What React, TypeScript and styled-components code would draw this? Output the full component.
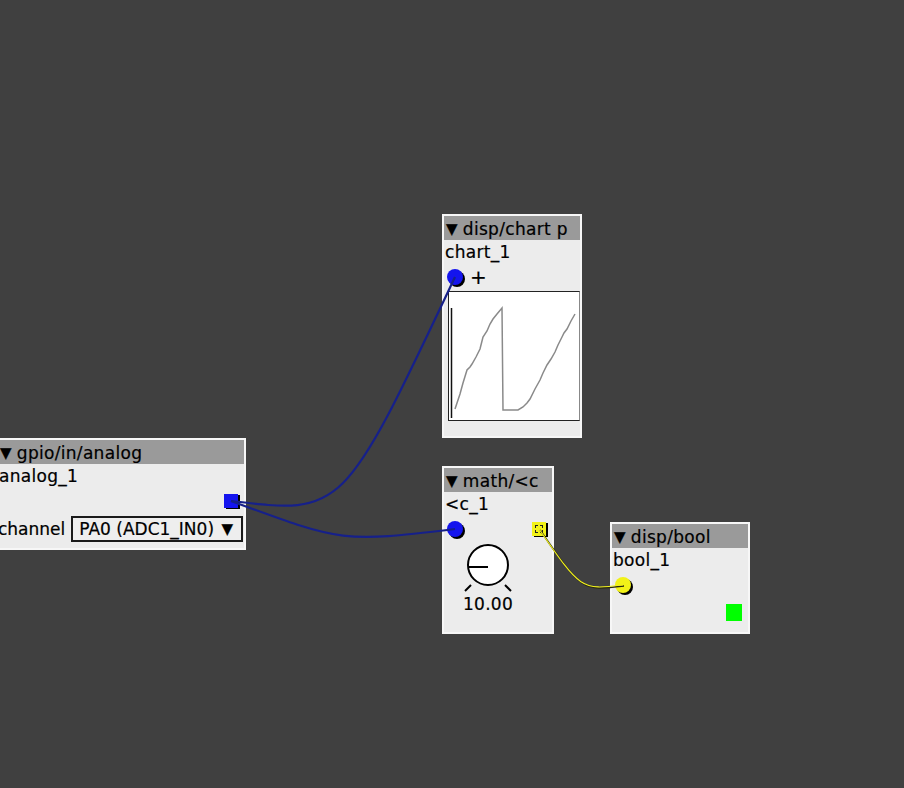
import React from 'react';
import styled, { createGlobalStyle } from 'styled-components';

const GlobalStyle = createGlobalStyle`
  html, body {
    margin: 0;
    padding: 0;
    background: #404040;
  }
  body {
    font-family: 'DejaVu Sans', 'Liberation Sans', sans-serif;
  }
`;

const Canvas = styled.div`
  position: relative;
  width: 904px;
  height: 788px;
  overflow: hidden;
  background: #404040;
`;

const ObjectBox = styled.div<{ $x: number; $y: number; $w: number; $h: number }>`
  position: absolute;
  left: ${(p) => p.$x}px;
  top: ${(p) => p.$y}px;
  width: ${(p) => p.$w}px;
  height: ${(p) => p.$h}px;
  box-sizing: border-box;
  border: 2px solid #f7f7f7;
  background: #ececec;
  display: flex;
  flex-direction: column;
  font-size: 17px;
  letter-spacing: 0.3px;
  -webkit-text-stroke: 0.2px #000;
  color: #000;
`;

const Header = styled.div`
  height: 24px;
  flex-shrink: 0;
  box-sizing: border-box;
  background: #9a9a9a;
  display: flex;
  align-items: center;
  padding: 2px 0 0 2px;
  white-space: nowrap;
  overflow: hidden;
`;

const Collapse = styled.span`
  font-size: 15px;
  margin-right: 5px;
`;

const InstanceName = styled.div`
  height: 24px;
  line-height: 24px;
  padding-left: 1px;
  white-space: nowrap;
  flex-shrink: 0;
`;

const PortRow = styled.div<{ $align?: string }>`
  height: 26px;
  flex-shrink: 0;
  display: flex;
  align-items: center;
  justify-content: ${(p) => p.$align || 'space-between'};
  padding: 0 6px 0 3px;
`;

const InletDot = styled.div<{ $color: string }>`
  width: 16px;
  height: 16px;
  border-radius: 50%;
  background: ${(p) => p.$color};
  box-shadow: 2px 2px 0 #000;
  flex-shrink: 0;
`;

const OutletSquare = styled.div<{ $color: string; $dashed?: boolean }>`
  position: relative;
  width: 14px;
  height: 14px;
  background: ${(p) => p.$color};
  box-shadow: 2px 1px 0 #000;
  flex-shrink: 0;

  &::after {
    content: '';
    display: ${(p) => (p.$dashed ? 'block' : 'none')};
    position: absolute;
    inset: 3px;
    border: 1px dashed #222;
  }
`;

const Plus = styled.span`
  margin-left: 7px;
  font-size: 20px;
  line-height: 1;
`;

const ChartArea = styled.div`
  margin: 1px 0 0 4px;
  width: 132px;
  height: 130px;
  box-sizing: border-box;
  background: #fff;
  border: 1px solid #222;
  border-right-color: #888;
`;

const ParamRow = styled.div`
  display: flex;
  align-items: center;
  justify-content: flex-end;
  gap: 6px;
  padding: 2px 1px 0 0;
  white-space: nowrap;
`;

const ParamLabel = styled.span`
  letter-spacing: 0;
`;

const Dropdown = styled.div`
  width: 175px;
  height: 26px;
  box-sizing: border-box;
  border: 2px solid #1a1a1a;
  background: #eeeeee;
  display: flex;
  align-items: center;
  justify-content: space-between;
  padding: 0 8px 0 6px;
  letter-spacing: 0;
`;

const DropArrow = styled.span`
  font-size: 15px;
`;

const KnobControl = styled.div`
  margin-left: 18px;
  width: 52px;
  display: flex;
  flex-direction: column;
  align-items: center;
`;

const KnobValue = styled.div`
  line-height: 18px;
  margin-top: 1px;
`;

const Led = styled.div<{ $on: boolean }>`
  align-self: flex-end;
  margin: 6px 6px 0 0;
  width: 16px;
  height: 17px;
  background: ${(p) => (p.$on ? '#00ff00' : '#226622')};
`;

const WireLayer = styled.svg`
  position: absolute;
  left: 0;
  top: 0;
  pointer-events: none;
`;

// patch cable: both control points hang a little below the lower end
const wirePath = (x1: number, y1: number, x2: number, y2: number) => {
  const cy = Math.max(y1, y2) + Math.abs(x2 - x1) * 0.06;
  const cx = (x1 + x2) / 2;
  return `M${x1} ${y1} C${cx} ${cy}, ${cx} ${cy}, ${x2} ${y2}`;
};

const trace = [
  [7, 118], [9, 112], [12, 103], [15, 92], [19, 79], [22, 76], [24, 73], [28, 66],
  [32, 58], [34, 50], [35, 46], [39, 40], [42, 33], [45, 28], [49, 23], [54, 17],
  [55, 119], [70, 119], [75, 116], [79, 112], [82, 108], [87, 98], [92, 89], [95, 82],
  [99, 74], [103, 68], [107, 61], [110, 54], [114, 46], [116, 42], [119, 38], [123, 30], [127, 23],
];

const Scope = () => (
  <svg width="130" height="128">
    <line x1="2.5" y1="16" x2="2.5" y2="126" stroke="#111" strokeWidth="1.5" />
    <polyline
      points={trace.map(([x, y]) => `${x - 1},${y - 1}`).join(' ')}
      fill="none"
      stroke="#8a8a8a"
      strokeWidth="1.5"
    />
  </svg>
);

const Knob = () => (
  <svg width="50" height="52">
    <circle cx="25" cy="23" r="20" fill="#fff" stroke="#000" strokeWidth="2" />
    <line x1="25" y1="25" x2="5" y2="25" stroke="#000" strokeWidth="2" />
    <line x1="2" y1="49" x2="8" y2="43" stroke="#000" strokeWidth="2" />
    <line x1="42" y1="43" x2="48" y2="49" stroke="#000" strokeWidth="2" />
  </svg>
);

export default function App() {
  return (
    <>
      <GlobalStyle />
      <Canvas>
        <ObjectBox $x={442} $y={214} $w={140} $h={224}>
          <Header>
            <Collapse>▼</Collapse>disp/chart p
          </Header>
          <InstanceName>chart_1</InstanceName>
          <PortRow $align="flex-start">
            <InletDot $color="#1414ee" />
            <Plus>+</Plus>
          </PortRow>
          <ChartArea>
            <Scope />
          </ChartArea>
        </ObjectBox>

        <ObjectBox $x={-4} $y={438} $w={250} $h={112}>
          <Header>
            <Collapse>▼</Collapse>gpio/in/analog
          </Header>
          <InstanceName>analog_1</InstanceName>
          <PortRow $align="flex-end">
            <OutletSquare $color="#1414ee" />
          </PortRow>
          <ParamRow>
            <ParamLabel>channel</ParamLabel>
            <Dropdown>
              <span>PA0 (ADC1_IN0)</span>
              <DropArrow>▼</DropArrow>
            </Dropdown>
          </ParamRow>
        </ObjectBox>

        <ObjectBox $x={442} $y={466} $w={112} $h={168}>
          <Header>
            <Collapse>▼</Collapse>math/&lt;c
          </Header>
          <InstanceName>&lt;c_1</InstanceName>
          <PortRow>
            <InletDot $color="#1414ee" />
            <OutletSquare $color="#f2f218" $dashed />
          </PortRow>
          <KnobControl>
            <Knob />
            <KnobValue>10.00</KnobValue>
          </KnobControl>
        </ObjectBox>

        <ObjectBox $x={610} $y={522} $w={140} $h={112}>
          <Header>
            <Collapse>▼</Collapse>disp/bool
          </Header>
          <InstanceName>bool_1</InstanceName>
          <PortRow $align="flex-start">
            <InletDot $color="#f2f218" />
          </PortRow>
          <Led $on />
        </ObjectBox>

        <WireLayer width="904" height="788">
          <path d={wirePath(231, 501, 455, 277)} fill="none" stroke="#16208a" strokeWidth="2.2" />
          <path d={wirePath(231, 501, 455, 529)} fill="none" stroke="#16208a" strokeWidth="2.2" />
          <path d={wirePath(540, 530, 624, 586)} fill="none" stroke="#2a2a10" strokeWidth="1.6" />
          <path d={wirePath(539, 529, 623, 585)} fill="none" stroke="#f0f020" strokeWidth="1.2" />
        </WireLayer>
      </Canvas>
    </>
  );
}
